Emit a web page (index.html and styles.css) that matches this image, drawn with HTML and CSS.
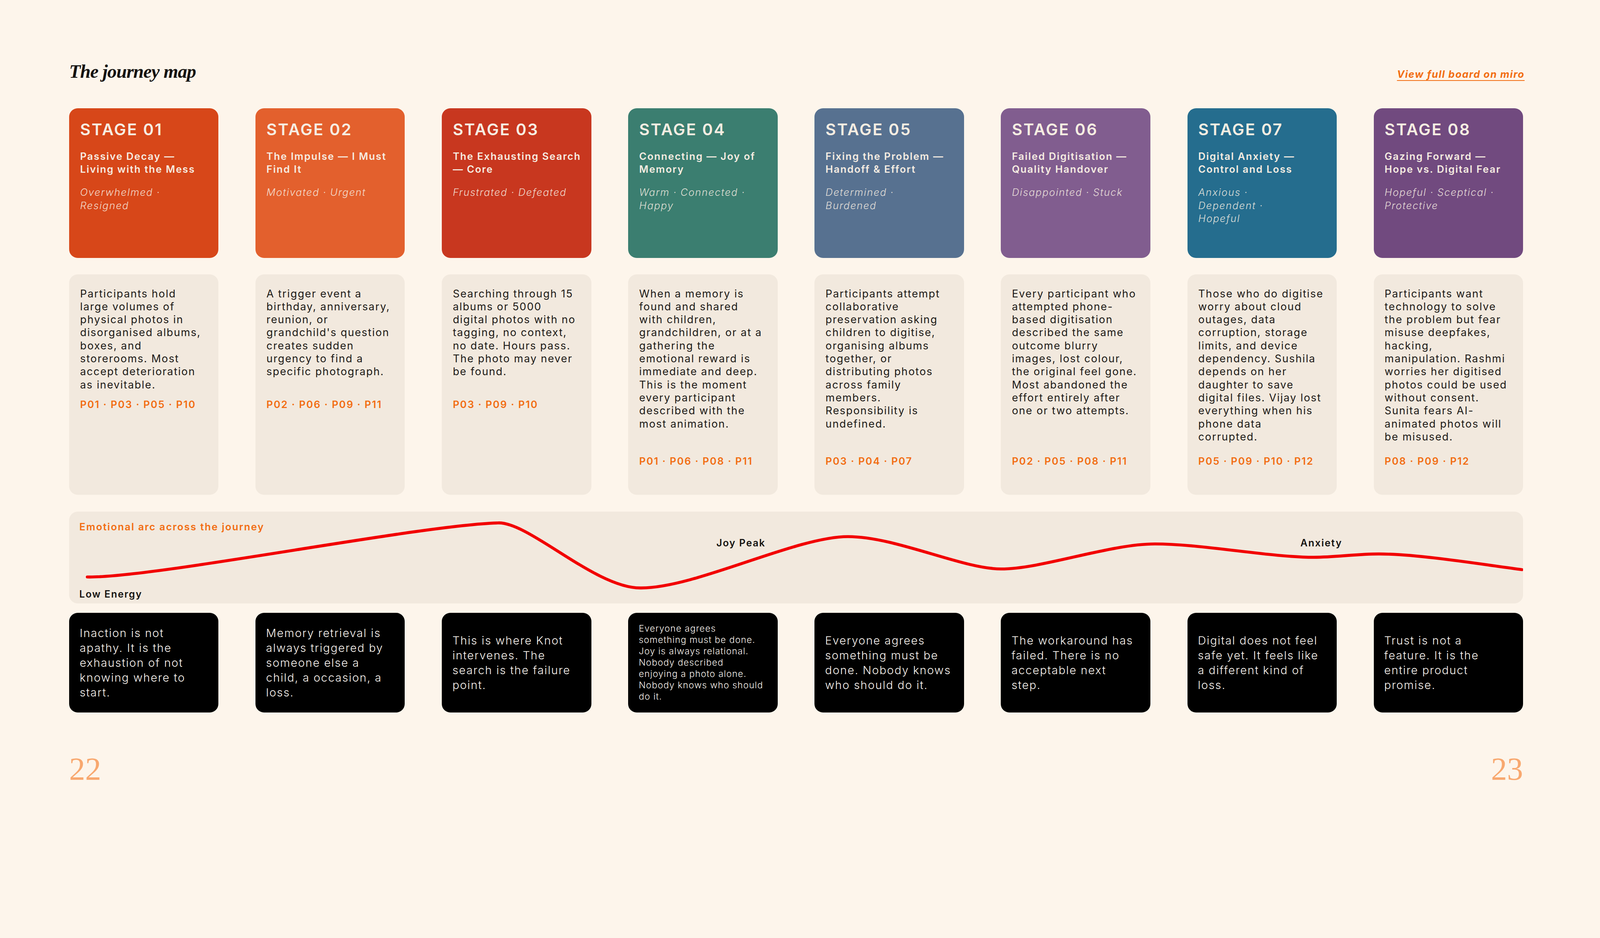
FILE: index.html
```html
<!DOCTYPE html>
<html lang="en">
<head>
<meta charset="utf-8">
<title>The journey map</title>
<link rel="stylesheet" href="styles.css">
</head>
<body>
<main class="page">
  <header class="page-head">
    <h1 class="page-title">The journey map</h1>
    <a class="board-link" href="#">View full board on miro</a>
  </header>

  <section class="stage-row">
    <article class="stage stage--1">
      <div class="stage-num">STAGE 01</div>
      <h2 class="stage-title">Passive Decay —<br>Living with the Mess</h2>
      <p class="stage-mood">Overwhelmed ·<br>Resigned</p>
    </article>
    <article class="stage stage--2">
      <div class="stage-num">STAGE 02</div>
      <h2 class="stage-title">The Impulse — I Must<br>Find It</h2>
      <p class="stage-mood">Motivated · Urgent</p>
    </article>
    <article class="stage stage--3">
      <div class="stage-num">STAGE 03</div>
      <h2 class="stage-title">The Exhausting Search<br>— Core</h2>
      <p class="stage-mood">Frustrated · Defeated</p>
    </article>
    <article class="stage stage--4">
      <div class="stage-num">STAGE 04</div>
      <h2 class="stage-title">Connecting — Joy of<br>Memory</h2>
      <p class="stage-mood">Warm · Connected ·<br>Happy</p>
    </article>
    <article class="stage stage--5">
      <div class="stage-num">STAGE 05</div>
      <h2 class="stage-title">Fixing the Problem —<br>Handoff &amp; Effort</h2>
      <p class="stage-mood">Determined ·<br>Burdened</p>
    </article>
    <article class="stage stage--6">
      <div class="stage-num">STAGE 06</div>
      <h2 class="stage-title">Failed Digitisation —<br>Quality Handover</h2>
      <p class="stage-mood">Disappointed · Stuck</p>
    </article>
    <article class="stage stage--7">
      <div class="stage-num">STAGE 07</div>
      <h2 class="stage-title">Digital Anxiety —<br>Control and Loss</h2>
      <p class="stage-mood">Anxious ·<br>Dependent ·<br>Hopeful</p>
    </article>
    <article class="stage stage--8">
      <div class="stage-num">STAGE 08</div>
      <h2 class="stage-title">Gazing Forward —<br>Hope vs. Digital Fear</h2>
      <p class="stage-mood">Hopeful · Sceptical ·<br>Protective</p>
    </article>
  </section>

  <section class="detail-row">
    <article class="detail">
      <p class="detail-text">Participants hold<br>large volumes of<br>physical photos in<br>disorganised albums,<br>boxes, and<br>storerooms. Most<br>accept deterioration<br>as inevitable.</p>
      <p class="detail-tags">P01 · P03 · P05 · P10</p>
    </article>
    <article class="detail">
      <p class="detail-text">A trigger event a<br>birthday, anniversary,<br>reunion, or<br>grandchild's question<br>creates sudden<br>urgency to find a<br>specific photograph.</p>
      <p class="detail-tags">P02 · P06 · P09 · P11</p>
    </article>
    <article class="detail">
      <p class="detail-text">Searching through 15<br>albums or 5000<br>digital photos with no<br>tagging, no context,<br>no date. Hours pass.<br>The photo may never<br>be found.</p>
      <p class="detail-tags">P03 · P09 · P10</p>
    </article>
    <article class="detail detail--pinned">
      <p class="detail-text">When a memory is<br>found and shared<br>with children,<br>grandchildren, or at a<br>gathering the<br>emotional reward is<br>immediate and deep.<br>This is the moment<br>every participant<br>described with the<br>most animation.</p>
      <p class="detail-tags">P01 · P06 · P08 · P11</p>
    </article>
    <article class="detail detail--pinned">
      <p class="detail-text">Participants attempt<br>collaborative<br>preservation asking<br>children to digitise,<br>organising albums<br>together, or<br>distributing photos<br>across family<br>members.<br>Responsibility is<br>undefined.</p>
      <p class="detail-tags">P03 · P04 · P07</p>
    </article>
    <article class="detail detail--pinned">
      <p class="detail-text">Every participant who<br>attempted phone-<br>based digitisation<br>described the same<br>outcome blurry<br>images, lost colour,<br>the original feel gone.<br>Most abandoned the<br>effort entirely after<br>one or two attempts.</p>
      <p class="detail-tags">P02 · P05 · P08 · P11</p>
    </article>
    <article class="detail detail--pinned">
      <p class="detail-text">Those who do digitise<br>worry about cloud<br>outages, data<br>corruption, storage<br>limits, and device<br>dependency. Sushila<br>depends on her<br>daughter to save<br>digital files. Vijay lost<br>everything when his<br>phone data<br>corrupted.</p>
      <p class="detail-tags">P05 · P09 · P10 · P12</p>
    </article>
    <article class="detail detail--pinned">
      <p class="detail-text">Participants want<br>technology to solve<br>the problem but fear<br>misuse deepfakes,<br>hacking,<br>manipulation. Rashmi<br>worries her digitised<br>photos could be used<br>without consent.<br>Sunita fears AI-<br>animated photos will<br>be misused.</p>
      <p class="detail-tags">P08 · P09 · P12</p>
    </article>
  </section>

  <section class="arc">
    <h3 class="arc-title">Emotional arc across the journey</h3>
    <svg class="arc-curve" viewBox="0 0 4361 276" aria-hidden="true">
      <path d="M54,196 C250,200 1050,40 1286,34 C1380,30 1580,232 1716,229 C1880,229 2180,75 2336,75 C2480,75 2680,172 2795,172 C2920,172 3120,97 3257,97 C3400,97 3600,137 3734,137 C3800,137 3860,127 3929,127 C4050,127 4250,160 4358,174" fill="none" stroke="#f20000" stroke-width="9" stroke-linecap="round" stroke-linejoin="round"/>
    </svg>
    <span class="arc-label arc-label--joy">Joy Peak</span>
    <span class="arc-label arc-label--anxiety">Anxiety</span>
    <span class="arc-label arc-label--low">Low Energy</span>
  </section>

  <section class="insight-row">
    <div class="insight"><p>Inaction is not<br>apathy. It is the<br>exhaustion of not<br>knowing where to<br>start.</p></div>
    <div class="insight"><p>Memory retrieval is<br>always triggered by<br>someone else a<br>child, a occasion, a<br>loss.</p></div>
    <div class="insight"><p>This is where Knot<br>intervenes. The<br>search is the failure<br>point.</p></div>
    <div class="insight insight--small"><p>Everyone agrees<br>something must be done.<br>Joy is always relational.<br>Nobody described<br>enjoying a photo alone.<br>Nobody knows who should<br>do it.</p></div>
    <div class="insight"><p>Everyone agrees<br>something must be<br>done. Nobody knows<br>who should do it.</p></div>
    <div class="insight"><p>The workaround has<br>failed. There is no<br>acceptable next<br>step.</p></div>
    <div class="insight"><p>Digital does not feel<br>safe yet. It feels like<br>a different kind of<br>loss.</p></div>
    <div class="insight"><p>Trust is not a<br>feature. It is the<br>entire product<br>promise.</p></div>
  </section>

  <footer class="page-foot">
    <span class="page-num">22</span>
    <span class="page-num">23</span>
  </footer>
</main>
</body>
</html>
```

FILE: styles.css
```css
* { box-sizing: border-box; }

html, body {
  margin: 0;
  padding: 0;
  background: #fdf5eb;
}

body {
  font-family: "Inter", "Noto Sans", sans-serif;
  color: #1d1a17;
  overflow: hidden;
}

.page {
  padding: 154px 197px 0 177px;
}

/* header */
.page-head {
  display: flex;
  justify-content: space-between;
  align-items: baseline;
}

.page-title {
  margin: 0;
  font-family: "Liberation Serif", "Times New Roman", serif;
  font-style: italic;
  font-weight: 700;
  font-size: 48px;
  line-height: 1.2;
  letter-spacing: -0.02em;
  color: #141210;
}

.board-link {
  font-size: 25.6px;
  font-weight: 700;
  font-style: italic;
  letter-spacing: 0.065em;
  color: #f26d12;
  text-decoration: underline;
  text-decoration-thickness: 2px;
  text-underline-offset: 6px;
  margin-right: -4px;
}

/* shared 8-column grid */
.stage-row,
.detail-row,
.insight-row {
  display: grid;
  grid-template-columns: repeat(8, minmax(0, 1fr));
  column-gap: 94.7px;
}

/* stage cards */
.stage-row { margin-top: 65px; }

.stage {
  height: 383px;
  border-radius: 22px;
  padding: 30px 10px 0 28px;
  color: #f6ede2;
}

.stage--1 { background: #d74719; }
.stage--2 { background: #e3602d; }
.stage--3 { background: #c8371f; }
.stage--4 { background: #3b7e70; }
.stage--5 { background: #577190; }
.stage--6 { background: #815d8f; }
.stage--7 { background: #256d8e; }
.stage--8 { background: #714a7f; }

.stage-num {
  font-size: 41px;
  font-weight: 600;
  line-height: 1.2;
  letter-spacing: 0.07em;
}

.stage-title {
  margin: 27px 0 0;
  font-size: 25.6px;
  font-weight: 600;
  line-height: 33.3px;
  letter-spacing: 0.08em;
  white-space: nowrap;
}

.stage-mood {
  margin: 26px 0 0;
  font-size: 25.6px;
  font-style: italic;
  font-weight: 300;
  line-height: 33.3px;
  letter-spacing: 0.075em;
  color: rgba(246, 237, 226, 0.9);
  white-space: nowrap;
}

/* detail cards */
.detail-row { margin-top: 42px; }

.detail {
  height: 564px;
  border-radius: 22px;
  background: #f2e9de;
  padding: 33px 6px 69px 28px;
  display: flex;
  flex-direction: column;
}

.detail-text {
  margin: 0;
  min-height: 266.4px;
  font-size: 27px;
  font-weight: 400;
  line-height: 33.3px;
  letter-spacing: 0.07em;
  color: #1d1a17;
  white-space: nowrap;
}

.detail-tags {
  margin: 17px 0 0;
  font-size: 25.6px;
  font-weight: 600;
  line-height: 33.3px;
  letter-spacing: 0.085em;
  color: #f26d12;
}

.detail--pinned .detail-tags { margin-top: auto; }

/* emotional arc */
.arc {
  position: relative;
  margin-top: 43px;
  height: 235.5px;
  border-radius: 22px;
  background: #f2e9de;
  padding: 26px 26px 0;
}

.arc-title {
  position: relative;
  z-index: 1;
  margin: 0;
  font-size: 25.6px;
  font-weight: 600;
  line-height: 25.6px;
  letter-spacing: 0.085em;
  color: #f26d12;
}

.arc-curve {
  position: absolute;
  left: 0;
  top: 0;
  width: 100%;
  height: 100%;
}

.arc-label {
  position: absolute;
  font-size: 25px;
  font-weight: 600;
  line-height: 25px;
  letter-spacing: 0.08em;
  color: #141210;
}

.arc-label--joy { left: 1657px; top: 68px; }
.arc-label--anxiety { left: 3152px; top: 68px; }
.arc-label--low { left: 26px; top: 199px; }

/* insight cards */
.insight-row { margin-top: 24px; }

.insight {
  height: 255px;
  border-radius: 22px;
  background: #000;
  padding: 0 6px 0 27px;
  display: flex;
  align-items: center;
}

.insight p {
  margin: 0;
  font-size: 29px;
  font-weight: 300;
  line-height: 38px;
  letter-spacing: 0.065em;
  color: #f8f3ee;
  white-space: nowrap;
}

.insight--small p {
  font-size: 23px;
  line-height: 29px;
  letter-spacing: 0.05em;
}

/* footer */
.page-foot {
  display: flex;
  justify-content: space-between;
  margin-top: 104px;
}

.page-num {
  font-family: "Liberation Serif", "Times New Roman", serif;
  font-size: 82px;
  line-height: 1;
  color: #f8a86f;
}
```
